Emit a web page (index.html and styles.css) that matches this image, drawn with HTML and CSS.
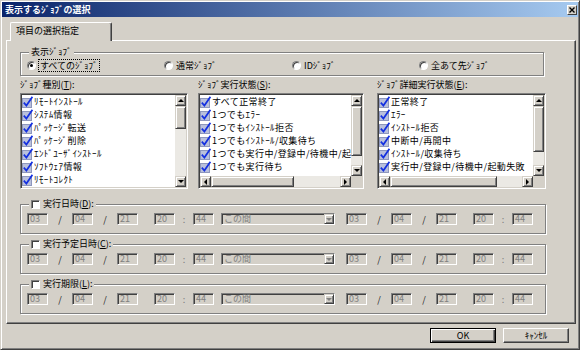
FILE: index.html
```html
<!DOCTYPE html>
<html lang="ja">
<head>
    <meta charset="utf-8">
    <title>表示するｼﾞｮﾌﾞの選択</title>
    <link rel="stylesheet" href="styles.css">
</head>
<body>
    <!-- shared check icon used by the list items -->
    <svg class="defs" width="0" height="0" aria-hidden="true">
        <symbol id="chk" viewBox="0 0 11 13">
            <rect x="0.5" y="3.5" width="9" height="9" fill="#b9c0dc" stroke="#8e97bd"/>
            <path d="M1.8 7.6 L4.4 10.6 L10.4 1.8" fill="none" stroke="#1430e0" stroke-width="1.7"/>
        </symbol>
    </svg>

    <div class="window">
        <!-- Title bar -->
        <div class="titlebar">
            <span class="title">表示するｼﾞｮﾌﾞの選択</span>
            <span class="close-btn">
                <svg width="6" height="6" viewBox="0 0 6 6"><path d="M0.5 0.5L5.5 5.5M5.5 0.5L0.5 5.5" stroke="#000" stroke-width="1.4"/></svg>
            </span>
        </div>

        <!-- Tabs -->
        <div class="tabs">
            <div class="tab">項目の選択指定</div>
        </div>

        <div class="panel">
            <!-- 表示ジョブ -->
            <div class="group view-group">
                <div class="group-title">表示ｼﾞｮﾌﾞ</div>
                <div class="radios">
                    <label class="radio r-all"><span class="radio-dot checked"></span><span class="focus">すべてのｼﾞｮﾌﾞ</span></label>
                    <label class="radio r-normal"><span class="radio-dot"></span>通常ｼﾞｮﾌﾞ</label>
                    <label class="radio r-id"><span class="radio-dot"></span>IDｼﾞｮﾌﾞ</label>
                    <label class="radio"><span class="radio-dot"></span>全あて先ｼﾞｮﾌﾞ</label>
                </div>
            </div>

            <!-- List boxes -->
            <div class="lists">
                <div class="list-col col-type">
                    <div class="list-label">ｼﾞｮﾌﾞ種別(<u>T</u>):</div>
                    <div class="listbox">
                        <div class="items">
                            <div class="item"><svg class="chk"><use href="#chk"/></svg>ﾘﾓｰﾄｲﾝｽﾄｰﾙ</div>
                            <div class="item"><svg class="chk"><use href="#chk"/></svg>ｼｽﾃﾑ情報</div>
                            <div class="item"><svg class="chk"><use href="#chk"/></svg>ﾊﾟｯｹｰｼﾞ転送</div>
                            <div class="item"><svg class="chk"><use href="#chk"/></svg>ﾊﾟｯｹｰｼﾞ削除</div>
                            <div class="item"><svg class="chk"><use href="#chk"/></svg>ｴﾝﾄﾞﾕｰｻﾞｲﾝｽﾄｰﾙ</div>
                            <div class="item"><svg class="chk"><use href="#chk"/></svg>ｿﾌﾄｳｪｱ情報</div>
                            <div class="item"><svg class="chk"><use href="#chk"/></svg>ﾘﾓｰﾄｺﾚｸﾄ</div>
                        </div>
                        <div class="vscroll">
                            <span class="sb-btn up"></span>
                            <span class="sb-thumb"></span>
                            <span class="sb-track"></span>
                            <span class="sb-btn down"></span>
                        </div>
                    </div>
                </div>

                <div class="list-col col-state">
                    <div class="list-label">ｼﾞｮﾌﾞ実行状態(<u>S</u>):</div>
                    <div class="listbox has-h">
                        <div class="items">
                            <div class="item"><svg class="chk"><use href="#chk"/></svg>すべて正常終了</div>
                            <div class="item"><svg class="chk"><use href="#chk"/></svg>1つでもｴﾗｰ</div>
                            <div class="item"><svg class="chk"><use href="#chk"/></svg>1つでもｲﾝｽﾄｰﾙ拒否</div>
                            <div class="item"><svg class="chk"><use href="#chk"/></svg>1つでもｲﾝｽﾄｰﾙ/収集待ち</div>
                            <div class="item"><svg class="chk"><use href="#chk"/></svg>1つでも実行中/登録中/待機中/起動失敗</div>
                            <div class="item"><svg class="chk"><use href="#chk"/></svg>1つでも実行待ち</div>
                        </div>
                        <div class="vscroll">
                            <span class="sb-btn up"></span>
                            <span class="sb-thumb"></span>
                            <span class="sb-track"></span>
                            <span class="sb-btn down"></span>
                        </div>
                        <div class="hscroll">
                            <span class="sb-btn left"></span>
                            <span class="sb-thumb"></span>
                            <span class="sb-track"></span>
                            <span class="sb-btn right"></span>
                        </div>
                        <div class="corner"></div>
                    </div>
                </div>

                <div class="list-col col-detail">
                    <div class="list-label">ｼﾞｮﾌﾞ詳細実行状態(<u>E</u>):</div>
                    <div class="listbox has-h">
                        <div class="items">
                            <div class="item"><svg class="chk"><use href="#chk"/></svg>正常終了</div>
                            <div class="item"><svg class="chk"><use href="#chk"/></svg>ｴﾗｰ</div>
                            <div class="item"><svg class="chk"><use href="#chk"/></svg>ｲﾝｽﾄｰﾙ拒否</div>
                            <div class="item"><svg class="chk"><use href="#chk"/></svg>中断中/再開中</div>
                            <div class="item"><svg class="chk"><use href="#chk"/></svg>ｲﾝｽﾄｰﾙ/収集待ち</div>
                            <div class="item"><svg class="chk"><use href="#chk"/></svg>実行中/登録中/待機中/起動失敗</div>
                        </div>
                        <div class="vscroll">
                            <span class="sb-btn up"></span>
                            <span class="sb-thumb"></span>
                            <span class="sb-track"></span>
                            <span class="sb-btn down"></span>
                        </div>
                        <div class="hscroll">
                            <span class="sb-btn left"></span>
                            <span class="sb-thumb"></span>
                            <span class="sb-track"></span>
                            <span class="sb-btn right"></span>
                        </div>
                        <div class="corner"></div>
                    </div>
                </div>
            </div>

            <!-- 実行日時 -->
            <div class="group date-group">
                <div class="group-title"><span class="checkbox"></span>実行日時(<u>D</u>):</div>
                <div class="date-row">
                    <span class="field">03</span><span class="sep">/</span><span class="field">04</span><span class="sep">/</span><span class="field">21</span><span class="blank"></span><span class="field">20</span><span class="colon">:</span><span class="field">44</span>
                    <span class="combo"><span class="combo-text">この間</span><span class="combo-btn"></span></span>
                    <span class="field">03</span><span class="sep">/</span><span class="field">04</span><span class="sep">/</span><span class="field">21</span><span class="blank"></span><span class="field">20</span><span class="colon">:</span><span class="field">44</span>
                </div>
            </div>

            <!-- 実行予定日時 -->
            <div class="group date-group">
                <div class="group-title"><span class="checkbox"></span>実行予定日時(<u>C</u>):</div>
                <div class="date-row">
                    <span class="field">03</span><span class="sep">/</span><span class="field">04</span><span class="sep">/</span><span class="field">21</span><span class="blank"></span><span class="field">20</span><span class="colon">:</span><span class="field">44</span>
                    <span class="combo"><span class="combo-text">この間</span><span class="combo-btn"></span></span>
                    <span class="field">03</span><span class="sep">/</span><span class="field">04</span><span class="sep">/</span><span class="field">21</span><span class="blank"></span><span class="field">20</span><span class="colon">:</span><span class="field">44</span>
                </div>
            </div>

            <!-- 実行期限 -->
            <div class="group date-group">
                <div class="group-title"><span class="checkbox"></span>実行期限(<u>L</u>):</div>
                <div class="date-row">
                    <span class="field">03</span><span class="sep">/</span><span class="field">04</span><span class="sep">/</span><span class="field">21</span><span class="blank"></span><span class="field">20</span><span class="colon">:</span><span class="field">44</span>
                    <span class="combo"><span class="combo-text">この間</span><span class="combo-btn"></span></span>
                    <span class="field">03</span><span class="sep">/</span><span class="field">04</span><span class="sep">/</span><span class="field">21</span><span class="blank"></span><span class="field">20</span><span class="colon">:</span><span class="field">44</span>
                </div>
            </div>
        </div>

        <!-- Dialog buttons -->
        <div class="buttons">
            <button class="btn default">OK</button>
            <button class="btn">ｷｬﾝｾﾙ</button>
        </div>
    </div>
</body>
</html>
```

FILE: styles.css
```css
/* Page */
body {
    margin: 0;
    background-color: #ffffff;
    font-family: "Noto Sans CJK JP", sans-serif;
    font-size: 9px;
    color: #000;
}

.defs {
    position: absolute;
    width: 0;
    height: 0;
}

/* Classic dialog frame */
.window {
    width: 580px;
    height: 350px;
    box-sizing: border-box;
    background-color: #d4d0c8;
    border: 1px solid;
    border-color: #d4d0c8 #404040 #404040 #d4d0c8;
    box-shadow: inset 1px 1px #ffffff, inset -1px -1px #808080;
    padding: 1px;
    display: flex;
    flex-direction: column;
}

/* Title bar */
.titlebar {
    height: 15px;
    flex: none;
    display: flex;
    align-items: center;
    justify-content: space-between;
    padding: 0 1px 0 3px;
    background: linear-gradient(to right, #0a246a, #a6caf0);
}

.title {
    color: #fff;
    font-weight: bold;
    line-height: 15px;
}

.close-btn {
    width: 10px;
    height: 10px;
    box-sizing: border-box;
    display: flex;
    align-items: center;
    justify-content: center;
    background-color: #d4d0c8;
    border: 1px solid;
    border-color: #fff #404040 #404040 #fff;
}

/* Tabs */
.tabs {
    display: flex;
    padding: 5px 0 0 8px;
    flex: none;
}

.tab {
    position: relative;
    z-index: 1;
    width: 102px;
    height: 19px;
    box-sizing: border-box;
    margin-bottom: -1px;
    padding-left: 5px;
    line-height: 16px;
    background-color: #d4d0c8;
    border: 1px solid;
    border-color: #fff #404040 transparent #fff;
    border-bottom: none;
    border-radius: 2px 2px 0 0;
    box-shadow: inset -1px 0 #808080;
}

/* Tab page */
.panel {
    height: 284px;
    box-sizing: border-box;
    margin: 0 2px 0 4px;
    padding: 11px 29px 0 13px;
    border: 1px solid;
    border-color: #fff #404040 #404040 #fff;
    box-shadow: inset -1px -1px #808080;
    flex: none;
}

/* Group boxes (etched frame) */
.group {
    border: 1px solid #808080;
    box-shadow: 1px 1px #fff, inset 1px 1px #fff;
}

.group-title {
    display: flex;
    align-items: center;
    width: fit-content;
    height: 12px;
    line-height: 12px;
    margin: -7px 0 0 2px;
    padding: 0 2px;
    background-color: #d4d0c8;
}

.view-group {
    margin-right: 2px;
    padding: 0 0 4px 6px;
}

.radios {
    display: flex;
    align-items: center;
    height: 12px;
    margin-top: 1px;
}

.radio {
    display: flex;
    align-items: center;
}

.r-all    { width: 137px; }
.r-normal { width: 128px; }
.r-id     { width: 127px; }

.radio-dot {
    width: 9px;
    height: 9px;
    box-sizing: border-box;
    border-radius: 50%;
    border: 1px solid;
    border-color: #808080 #fff #fff #808080;
    box-shadow: inset 1px 1px #404040;
    background-color: #fff;
    margin-right: 3px;
    display: flex;
    align-items: center;
    justify-content: center;
}

.radio-dot.checked::after {
    content: "";
    width: 3px;
    height: 3px;
    border-radius: 50%;
    background-color: #000;
}

.focus {
    outline: 1px dotted #000;
    padding: 0 1px;
    line-height: 11px;
}

/* List boxes */
.lists {
    display: flex;
    margin-top: 3px;
}

.col-type   { width: 168px; }
.col-state  { width: 166px; margin-left: 10px; }
.col-detail { width: 169px; margin-left: 13px; }

.list-label {
    height: 12px;
    line-height: 12px;
    margin-bottom: 2px;
    white-space: nowrap;
}

.listbox {
    height: 96px;
    box-sizing: border-box;
    display: grid;
    grid-template-columns: 1fr 11px;
    padding: 1px;
    background-color: #fff;
    border: 1px solid;
    border-color: #808080 #fff #fff #808080;
    box-shadow: inset 1px 1px #404040, inset -1px -1px #d4d0c8;
}

.listbox.has-h {
    grid-template-rows: 1fr 11px;
}

.items {
    overflow: hidden;
    min-width: 0;
}

.item {
    display: flex;
    align-items: center;
    height: 13px;
    line-height: 13px;
    white-space: nowrap;
    letter-spacing: 0.4px;
}

.chk {
    width: 11px;
    height: 13px;
    flex: none;
    margin-right: 1px;
}

/* Classic scroll bars */
.vscroll {
    display: flex;
    flex-direction: column;
}

.hscroll {
    display: flex;
}

.sb-btn,
.sb-thumb {
    flex: none;
    box-sizing: border-box;
    display: flex;
    align-items: center;
    justify-content: center;
    background-color: #d4d0c8;
    border: 1px solid;
    border-color: #d4d0c8 #404040 #404040 #d4d0c8;
    box-shadow: inset 1px 1px #fff, inset -1px -1px #808080;
}

.vscroll .sb-btn { height: 11px; }
.hscroll .sb-btn { width: 11px; }

.sb-track {
    flex: 1;
    background-color: #ebe9e4;
}

.sb-btn::before {
    content: "";
    border: solid transparent;
}

.up::before    { border-width: 0 3px 3px;   border-bottom-color: #000; }
.down::before  { border-width: 3px 3px 0;   border-top-color: #000; }
.left::before  { border-width: 3px 3px 3px 0; border-right-color: #000; }
.right::before { border-width: 3px 0 3px 3px; border-left-color: #000; }

.col-type .vscroll .sb-thumb   { height: 23px; }
.col-state .vscroll .sb-thumb  { height: 50px; }
.col-detail .vscroll .sb-thumb { height: 46px; }
.col-state .hscroll .sb-thumb  { width: 83px; }
.col-detail .hscroll .sb-thumb { width: 107px; }

.corner {
    background-color: #d4d0c8;
}

/* Date / time groups */
.date-group {
    margin-top: 15px;
    padding: 0 0 8px 6px;
}

.date-group + .date-group {
    margin-top: 10px;
}

.checkbox {
    width: 9px;
    height: 9px;
    box-sizing: border-box;
    background-color: #fff;
    border: 1px solid;
    border-color: #808080 #fff #fff #808080;
    box-shadow: inset 1px 1px #404040;
    margin-right: 3px;
}

.date-row {
    display: flex;
    align-items: center;
    height: 12px;
    margin-top: 3px;
}

.field,
.combo {
    height: 12px;
    box-sizing: border-box;
    background-color: #d4d0c8;
    color: #808080;
    border: 1px solid;
    border-color: #808080 #fff #fff #808080;
    box-shadow: inset 1px 1px #404040;
    line-height: 9px;
}

.field {
    width: 21px;
    padding-left: 2px;
}

.sep {
    width: 24px;
    text-align: center;
    color: #202020;
}

.blank {
    width: 16px;
}

.colon {
    width: 18px;
    text-align: center;
    color: #808080;
}

.combo {
    width: 114px;
    margin: 0 11px 0 7px;
    display: flex;
    justify-content: space-between;
    padding-left: 2px;
}

.combo-btn {
    width: 10px;
    height: 10px;
    box-sizing: border-box;
    display: flex;
    align-items: center;
    justify-content: center;
    background-color: #d4d0c8;
    border: 1px solid;
    border-color: #d4d0c8 #404040 #404040 #d4d0c8;
    box-shadow: inset 1px 1px #fff, inset -1px -1px #808080;
}

.combo-btn::before {
    content: "";
    border: solid transparent;
    border-width: 3px 3px 0;
    border-top-color: #808080;
}

/* Dialog buttons */
.buttons {
    display: flex;
    justify-content: flex-end;
    gap: 7px;
    margin-top: 4px;
    padding-right: 9px;
}

.btn {
    width: 66px;
    height: 15px;
    box-sizing: border-box;
    padding: 0;
    font: inherit;
    line-height: 12px;
    color: #000;
    background-color: #d4d0c8;
    border: 1px solid;
    border-color: #fff #404040 #404040 #fff;
    box-shadow: inset -1px -1px #808080;
}

.btn.default {
    border-color: #000;
    box-shadow: inset 1px 1px #fff, inset -1px -1px #404040, inset -2px -2px #808080;
}
```
